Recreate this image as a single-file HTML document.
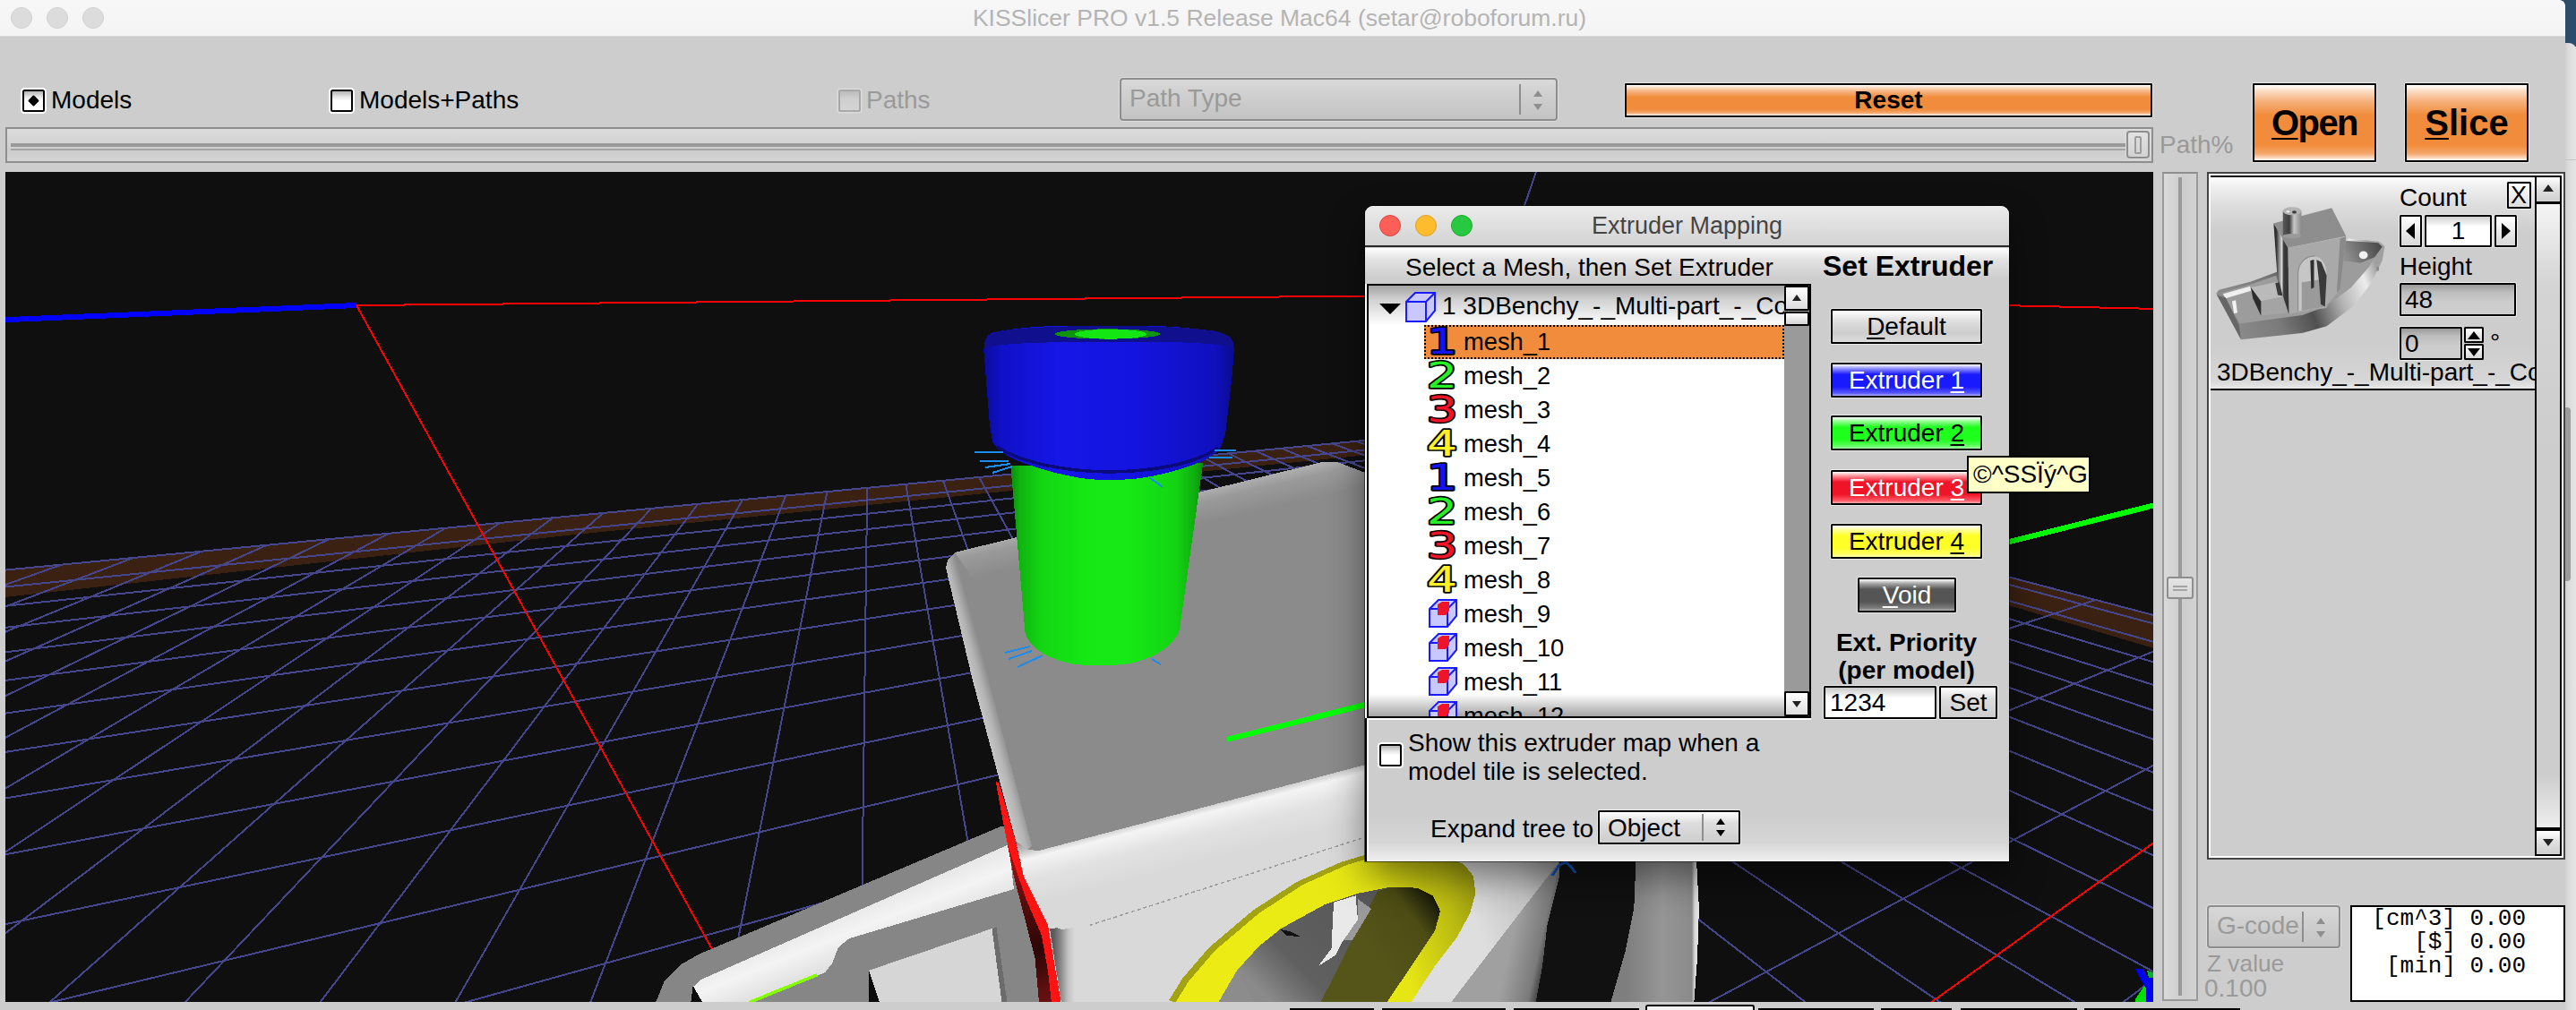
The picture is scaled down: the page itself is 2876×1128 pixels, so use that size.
<!DOCTYPE html>
<html lang="en">
<head>
<meta charset="utf-8">
<title>KISSlicer PRO v1.5 Release Mac64</title>
<style>
*{box-sizing:border-box;margin:0;padding:0}
html,body{width:2876px;height:1128px;overflow:hidden;background:#cdcdcd}
body{position:relative;font-family:"Liberation Sans",sans-serif;font-size:28px;color:#000;line-height:1}
.a{position:absolute}
.t{position:absolute;white-space:nowrap;line-height:30px;height:30px}
.g{color:#9a9a9a}
.b{font-weight:bold}
u{text-decoration-thickness:2px;text-underline-offset:3px}
#titlebar{left:0;top:0;width:2864px;height:41px;background:linear-gradient(#f7f7f7,#f4f4f4);border-bottom:1px solid #d6d6d6}
.tl{position:absolute;width:24px;height:24px;border-radius:50%;background:#dcdcdc;border:1px solid #d0d0d0;top:8px}
#wtitle{left:0;width:2857px;top:5px;text-align:center;color:#b4b4b4;font-size:26.5px}
.cb{position:absolute;width:25px;height:25px;background:linear-gradient(#b4b4b4,#e8e8e8 30%,#fff 50%);border:2px solid #000;border-radius:2.5px;box-shadow:0 0 0 2px #fff}
.cbd{border-color:#a8a8a8;background:linear-gradient(#bcbcbc,#cfcfcf 40%,#d4d4d4);box-shadow:0 0 0 1.5px #dcdcdc}
.btn{position:absolute;border:2px solid #000;border-radius:1px;text-align:center;box-shadow:0 0 0 1px rgba(255,255,255,.55)}
.or{background:linear-gradient(#fff 0%,#fbdcc4 8%,#f6b07a 22%,#f08c3c 40%,#f08c3c 80%,#f4a76c 91%,#fbd9bf 97%,#fff 100%)}
.dd{position:absolute;border:2px solid #8e8e8e;border-radius:4px;background:linear-gradient(#d8d8d8,#cbcbcb 60%,#c4c4c4);box-shadow:0 0 0 1px #dedede}
#vp{left:6px;top:192px;width:2398px;height:927px;background:#0f0f0f;overflow:hidden}
</style>
</head>
<body>
<!-- title bar -->
<div class="a" id="titlebar"></div>
<div class="tl" style="left:12px"></div><div class="tl" style="left:52px"></div><div class="tl" style="left:92px"></div>
<div class="t" id="wtitle">KISSlicer PRO v1.5 Release Mac64 (setar@roboforum.ru)</div>

<!-- toolbar row -->
<div class="cb" style="left:25px;top:100px"></div>
<div class="a" style="left:33px;top:108px;width:9px;height:9px;background:#000;transform:rotate(45deg);border-radius:1px"></div>
<div class="t" style="left:57px;top:97px">Models</div>
<div class="cb" style="left:369px;top:100px"></div>
<div class="t" style="left:401px;top:97px">Models+Paths</div>
<div class="cb cbd" style="left:936px;top:100px"></div>
<div class="t g" style="left:967px;top:97px">Paths</div>
<div class="dd" style="left:1250px;top:87px;width:489px;height:48px"></div>
<div class="t g" style="left:1261px;top:95px">Path Type</div>
<div class="a" style="left:1696px;top:94px;width:2px;height:34px;background:#8e8e8e"></div>
<div class="btn or b" style="left:1814px;top:93px;width:589px;height:38px;line-height:34px">Reset</div>
<div class="btn or b" style="left:2515px;top:93px;width:138px;height:88px;font-size:40px;line-height:84px;letter-spacing:-1.6px"><u>O</u>pen</div>
<div class="btn or b" style="left:2685px;top:93px;width:138px;height:88px;font-size:40px;line-height:84px"><u>S</u>lice</div>

<!-- path slider -->
<div class="a" style="left:6px;top:142px;width:2398px;height:40px;border:2px solid #8e8e8e;background:linear-gradient(#dcdcdc,#cdcdcd 70%,#d4d4d4)"></div>
<div class="a" style="left:12px;top:160px;width:2386px;height:4px;background:#999"></div>
<div class="a" style="left:12px;top:166px;width:2386px;height:2px;background:#a4a4a4"></div>
<div class="t g" style="left:2411px;top:147px">Path%</div>

<!-- viewport -->
<div class="a" id="vp">
<!--SCENE-START--><svg class="a" style="left:0;top:0" width="2398" height="927" viewBox="6 192 2398 927" shape-rendering="crispEdges">
<polygon points="0.0,637.2 1626.5,482.1 1626.5,498.1 1523.0,508.5 640.0,597.2 0.0,667.5" fill="#3b2111"/>
<polygon points="1626.5,482.1 2244.0,644.8 2410.0,688.5 2410.0,725.5 2244.0,676.5 1626.5,498.1" fill="#3b2111"/>
<path d="M1527.6 2903.6L3028.3 851.4M47.4 2902.8L2798.4 790.8M-1432.8 2902.0L2614.7 742.4M-2913.0 2901.2L2464.6 702.9M-4393.3 2900.3L2339.6 670.0M-5873.5 2899.5L2233.9 642.1M-7007.4 2815.6L2143.4 618.3M-4065.2 1891.4L2065.0 597.6M-2708.4 1465.3L1996.4 579.6M-1927.4 1220.0L1935.9 563.6M-1419.9 1060.6L1882.1 549.5M-1063.7 948.7L1834.0 536.8M-799.8 865.8L1790.8 525.4M-596.5 801.9L1751.7 515.1M-435.1 751.2L1716.1 505.7M-303.8 710.0L1683.6 497.2M-195.0 675.8L1653.9 489.4M-103.2 647.0L1626.5 482.1M-6306.4 2899.3L69.0 630.6M-5823.4 2899.6L148.9 623.0M-5340.4 2899.8L225.2 615.7M-4857.5 2900.1L297.9 608.8M-4374.5 2900.4L367.4 602.1M-3891.5 2900.6L433.9 595.8M-3408.6 2900.9L497.6 589.7M-2925.6 2901.2L558.6 583.9M-2442.6 2901.4L617.1 578.3M-1959.7 2901.7L673.3 573.0M-1476.7 2902.0L727.3 567.8M-993.7 2902.2L779.2 562.9M-510.8 2902.5L829.1 558.1M-27.8 2902.7L877.2 553.6M455.2 2903.0L923.5 549.1M938.1 2903.3L968.2 544.9M1421.1 2903.5L1011.3 540.8M1904.1 2903.8L1052.9 536.8M2387.0 2904.1L1093.1 533.0M2870.0 2904.3L1132.0 529.3M3353.0 2904.6L1169.6 525.7M3835.9 2904.9L1206.0 522.2M4318.9 2905.1L1241.2 518.9M4801.9 2905.4L1275.3 515.6M5284.8 2905.7L1308.4 512.5M5767.8 2905.9L1340.5 509.4M6250.7 2906.2L1371.6 506.4M6733.7 2906.5L1401.8 503.6M7216.7 2906.7L1431.1 500.8M7699.6 2907.0L1459.6 498.1M8182.6 2907.3L1487.2 495.4M8665.6 2907.5L1514.1 492.9M9148.5 2907.8L1540.3 490.4M9631.5 2908.0L1565.8 487.9M10114.5 2908.3L1590.6 485.6M10597.4 2908.6L1614.7 483.3M10838.9 2908.7L1626.5 482.1" stroke="#46468c" stroke-width="2" fill="none"/>
<path d="M398 341L1700 329L2410 345M398 341L795 1060M2404 941.5L2156 1119.5" stroke="#f00" stroke-width="2" fill="none"/>
<path d="M1668 329L1715.6 190" stroke="#46468c" stroke-width="2" fill="none"/>
<path d="M0 357.4L398 341" stroke="#00f" stroke-width="6" fill="none"/>
<defs>
<linearGradient id="gBlue" x1="0" x2="1" y1="0" y2="0"><stop offset="0" stop-color="#0c0c9a"/><stop offset=".07" stop-color="#1010c8"/><stop offset=".3" stop-color="#1616e6"/><stop offset=".6" stop-color="#1414e0"/><stop offset=".92" stop-color="#1010c0"/><stop offset="1" stop-color="#0b0b90"/></linearGradient>
<linearGradient id="gGreen" x1="0" x2="1" y1="0" y2="0"><stop offset="0" stop-color="#0b8c0b"/><stop offset=".05" stop-color="#10b410"/><stop offset=".16" stop-color="#13d613"/><stop offset=".4" stop-color="#15e815"/><stop offset=".6" stop-color="#16ea16"/><stop offset=".86" stop-color="#13d413"/><stop offset=".96" stop-color="#0fac0f"/><stop offset="1" stop-color="#0b8c0b"/></linearGradient>
<linearGradient id="gRoofTop" gradientUnits="userSpaceOnUse" x1="1290" y1="562" x2="1298" y2="596"><stop offset="0" stop-color="#acacac"/><stop offset=".3" stop-color="#9a9a9a"/><stop offset="1" stop-color="#8b8b8b"/></linearGradient>
<linearGradient id="gRoofLeft" gradientUnits="userSpaceOnUse" x1="1094" y1="790" x2="1112" y2="785"><stop offset="0" stop-color="#c4c4c4"/><stop offset=".45" stop-color="#b4b4b4"/><stop offset="1" stop-color="#8b8b8b"/></linearGradient>
<linearGradient id="gLip" gradientUnits="userSpaceOnUse" x1="1330" y1="890" x2="1348" y2="960"><stop offset="0" stop-color="#8c8c8c"/><stop offset=".12" stop-color="#b4b4b4"/><stop offset=".3" stop-color="#f4f4f4"/><stop offset=".6" stop-color="#e2e2e2"/><stop offset="1" stop-color="#d9d9d9"/></linearGradient>
<linearGradient id="gCorner" gradientUnits="userSpaceOnUse" x1="1176" y1="0" x2="1200" y2="0"><stop offset="0" stop-color="#5a5a5a"/><stop offset=".35" stop-color="#8a8a8a"/><stop offset=".7" stop-color="#c4c4c4"/><stop offset="1" stop-color="#d9d9d9"/></linearGradient>
<linearGradient id="gRed" gradientUnits="userSpaceOnUse" x1="1130" y1="950" x2="1165" y2="1110"><stop offset="0" stop-color="#b01010"/><stop offset=".35" stop-color="#5a0c0c"/><stop offset=".7" stop-color="#2c0606"/><stop offset="1" stop-color="#641010"/></linearGradient>
<linearGradient id="gYel" gradientUnits="userSpaceOnUse" x1="1380" y1="1040" x2="1650" y2="960"><stop offset="0" stop-color="#ecec14"/><stop offset=".6" stop-color="#e6e614"/><stop offset=".85" stop-color="#b8b812"/><stop offset="1" stop-color="#8e8e10"/></linearGradient>
<linearGradient id="gOlive" gradientUnits="userSpaceOnUse" x1="1530" y1="1060" x2="1608" y2="1000"><stop offset="0" stop-color="#55551a"/><stop offset=".6" stop-color="#4c4c14"/><stop offset="1" stop-color="#0c0c08"/></linearGradient>
<linearGradient id="gHole" gradientUnits="userSpaceOnUse" x1="1400" y1="1100" x2="1500" y2="1000"><stop offset="0" stop-color="#8a8a8a"/><stop offset=".35" stop-color="#606060"/><stop offset="1" stop-color="#585858"/></linearGradient>
<linearGradient id="gSideA" gradientUnits="userSpaceOnUse" x1="1640" y1="1010" x2="1740" y2="975"><stop offset="0" stop-color="#dedede"/><stop offset=".6" stop-color="#c4c4c4"/><stop offset="1" stop-color="#9a9a9a"/></linearGradient>
<linearGradient id="gSideB" gradientUnits="userSpaceOnUse" x1="1690" y1="1040" x2="1735" y2="1050"><stop offset="0" stop-color="#a0a0a0"/><stop offset=".7" stop-color="#7a7a7a"/><stop offset="1" stop-color="#2a2a2a"/></linearGradient>
<linearGradient id="gSideC" gradientUnits="userSpaceOnUse" x1="1815" y1="0" x2="1897" y2="0"><stop offset="0" stop-color="#7e7e7e"/><stop offset=".5" stop-color="#969696"/><stop offset=".9" stop-color="#8a8a8a"/><stop offset=".94" stop-color="#d8d8d8"/><stop offset="1" stop-color="#e8e8e8"/></linearGradient>
<linearGradient id="gBeam" gradientUnits="userSpaceOnUse" x1="880" y1="1040" x2="900" y2="1090"><stop offset="0" stop-color="#e6e6e6"/><stop offset=".5" stop-color="#f4f4f4"/><stop offset="1" stop-color="#e2e2e2"/></linearGradient>
</defs>
<polygon points="731.9,1120.0 741.7,1096.0 761.4,1076.4 781.0,1065.4 1117.4,923.0 1124.0,924.0 1200.0,1120.0" fill="#868686"/>
<polygon points="773.7,1102.2 783.5,1093.6 1126.0,943.3 1132.0,993.0 948.0,1048.2 936.0,1058.0 929.0,1076.0 921.0,1086.2 837.5,1120.0 771.2,1120.0" fill="url(#gBeam)"/>
<polygon points="771.2,1120.0 773.7,1101.0 784.7,1120.0" fill="#0c0c0c"/>
<path d="M836.3 1119.6L912.4 1088.7" stroke="#86ff00" stroke-width="3.5"/>
<polygon points="970.0,1083.8 1107.5,1037.1 1118.6,1120.0 982.3,1120.0" fill="#d6d6d6"/>
<polygon points="970.0,1083.8 982.3,1120.0 970.0,1120.0" fill="#0c0c0c"/>
<polygon points="1107.5,1037.1 1112.5,1036.0 1124.6,1120.0 1118.6,1120.0" fill="#6c6c6c"/>
<polygon points="1168.0,1030.0 1216.0,1033.0 1524.0,935.0 1540.0,930.0 1540.0,1120.0 1184.0,1120.0" fill="#d9d9d9"/>
<polygon points="1172.0,1037.0 1208.0,1034.0 1208.0,1120.0 1185.0,1120.0" fill="url(#gCorner)"/>
<polygon points="1111.8,873.0 1119.0,913.0 1131.9,978.7 1155.5,1069.8 1160.0,1120.0 1184.7,1120.0 1170.0,1033.3 1142.8,978.7 1133.7,938.6 1115.5,875.0" fill="#ff1414"/>
<polygon points="1124.0,940.0 1131.0,962.0 1146.0,1005.0 1163.0,1045.0 1170.0,1085.0 1174.0,1120.0 1160.0,1120.0 1155.5,1069.8 1131.9,978.7" fill="url(#gRed)"/>
<polygon points="1134.0,939.0 1147.0,949.0 1160.0,950.0 1540.0,850.0 1540.0,930.0 1216.5,1033.4 1186.0,1038.0 1170.0,1033.0 1143.0,979.0" fill="url(#gLip)"/>
<path d="M1216.5 1033.4L1523.4 935.2" stroke="#9c9c9c" stroke-width="1.5" stroke-dasharray="4 3" fill="none"/>
<polygon points="1056.0,634.0 1058.0,626.0 1066.0,617.0 1474.0,516.5 1493.0,516.0 1540.0,534.0 1540.0,850.0 1160.0,950.0 1147.0,949.0 1134.0,939.0 1086.0,760.0" fill="#8b8b8b"/>
<polygon points="1066.0,617.0 1474.0,516.5 1493.0,516.0 1540.0,534.0 1540.0,540.0 1082.0,648.0" fill="url(#gRoofTop)"/>
<polygon points="1056.0,634.0 1058.0,626.0 1066.0,617.0 1082.0,640.0 1104.0,760.0 1152.0,945.0 1147.0,949.0 1134.0,939.0 1086.0,760.0" fill="url(#gRoofLeft)"/>
<path d="M1370 826L2410 563" stroke="#00ff00" stroke-width="6" fill="none"/>
<polygon points="1540.0,940.0 1742.0,940.0 1742.0,964.0 1619.6,1120.0 1540.0,1120.0" fill="url(#gSideA)"/>
<polygon points="1741.0,962.0 1745.0,962.0 1741.5,977.2 1727.5,1033.0 1722.0,1079.6 1714.5,1120.0 1619.6,1120.0" fill="url(#gSideB)"/>
<polygon points="1741.0,962.0 1826.4,962.0 1824.3,1014.5 1815.0,1061.0 1798.2,1120.0 1714.5,1120.0 1722.0,1079.6 1727.5,1033.0 1741.5,977.2" fill="#111"/>
<polygon points="1826.4,962.0 1894.1,962.0 1896.9,1014.5 1895.0,1070.3 1891.3,1120.0 1798.2,1120.0 1815.0,1061.0 1824.3,1014.5" fill="url(#gSideC)"/>
<polygon points="1305.2,1117.0 1320.0,1093.0 1349.4,1058.7 1398.5,1017.0 1447.6,985.0 1496.7,963.0 1521.3,955.6 1553.0,950.0 1560.0,953.0 1528.3,958.6 1503.7,966.0 1454.6,988.0 1405.5,1020.0 1356.4,1061.7 1327.0,1096.0 1312.2,1120.0" fill="#a2a212"/>
<polygon points="1312.2,1120.0 1327.0,1096.0 1356.4,1061.7 1405.5,1020.0 1454.6,988.0 1503.7,966.0 1528.3,958.6 1560.0,953.0 1600.0,953.0 1633.8,964.7 1644.9,978.2 1647.3,997.8 1641.2,1020.0 1626.5,1047.0 1601.9,1078.9 1575.0,1120.0" fill="url(#gYel)"/>
<polygon points="1360.0,1120.0 1381.0,1083.8 1405.5,1056.8 1430.0,1037.1 1479.2,1010.1 1516.0,997.8 1552.8,990.5 1582.3,991.7 1599.5,1000.3 1608.0,1017.5 1602.0,1039.6 1577.4,1076.4 1548.0,1120.0" fill="url(#gHole)"/>
<polygon points="1538.0,995.4 1552.8,990.5 1582.3,991.7 1599.5,1000.3 1608.0,1017.5 1602.0,1039.6 1577.4,1076.4 1548.0,1120.0 1474.2,1120.0 1516.0,1037.1" fill="url(#gOlive)"/>
<polygon points="1360.0,1120.0 1381.0,1083.8 1400.6,1120.0" fill="#8c8c8c"/>
<polygon points="1489.0,1007.7 1513.5,1000.3 1516.0,1027.3 1498.8,1051.9 1491.4,1066.6 1471.8,1078.9 1486.5,1059.2" fill="#e9e9e9"/>
<polygon points="1516.0,1004.0 1531.0,1015.0 1510.0,1050.0 1500.0,1050.0 1516.0,1027.0" fill="#9a9a9a"/>
<polygon points="1429.0,1038.0 1440.0,1040.0 1452.0,1046.0 1436.0,1045.0" fill="#111"/>
<path d="M1733 978L1741 966L1748 963L1754 968L1759 975" stroke="#0a50b4" stroke-width="3" fill="none"/>
<path d="M1128.3 520L1144.5 706C1147 722 1170 737 1200 742Q1232 745 1262 741C1290 735 1312 720 1317 703L1343.2 517Z" fill="url(#gGreen)"/>
<path d="M1177.7 364C1160 364.3 1125 367 1107 371.8C1100 375 1098.5 382 1098.3 391.6L1100.8 422.8L1105 474.8L1108.1 493.5C1110 499 1120 506.5 1128.9 511.2C1140 517 1180 531 1215.2 535.1Q1239 537 1263 535.1C1290 533 1325 523 1344.1 514.3C1352 510 1361 504 1362.8 499.7L1368 485.2L1375.3 422.8L1377.8 391.6C1378 383 1376 376 1358.6 370.8C1340 367 1310 364.3 1288 364Z" fill="url(#gBlue)"/>
<path d="M1113 499C1140 517 1190 526.5 1237.7 527C1285 526.5 1332 519 1360 500" stroke="#0a0a78" stroke-width="3.5" fill="none"/>
<path d="M1099 388C1100 374 1108 371 1125 368.5C1160 364.5 1200 364 1238 364C1280 364 1320 365 1352 369C1370 372 1377 376 1377.5 388C1350 381.5 1290 381.5 1238 382C1180 382 1130 382 1099 388Z" fill="#10108e"/>
<ellipse cx="1236.5" cy="373" rx="58.6" ry="5.6" fill="#109410"/>
<ellipse cx="1240" cy="373.2" rx="40" ry="5.4" fill="#14e614"/>
<path d="M1088 505H1120M1094 515H1126M1100 522L1128 518M1108 528L1130 521M1356 503H1380M1350 511H1376M1283 533L1298 544M1122 729L1150 722M1126 736L1152 727M1136 745L1164 732M1286 736L1296 742" stroke="#1a8cf0" stroke-width="2" fill="none"/>
<polygon points="2384,1082 2393,1082 2398,1092 2404,1092 2404,1120 2396,1120 2395,1102 2390,1094" fill="#0000f0"/>
<polygon points="2384,1120 2384,1116 2394,1101 2396,1104 2396,1120" fill="#00e000"/>
<polygon points="2397,1084 2404,1086 2404,1092 2399,1092" fill="#00b030"/>
</svg><!--SCENE-END-->
</div>

<!-- dropdown arrows (Path Type) -->
<svg class="a" style="left:1709px;top:100px" width="16" height="24" viewBox="0 0 16 24"><path d="M8 1 L13 8 H3 Z M8 23 L13 16 H3 Z" fill="#8e8e8e"/></svg>
<!-- path slider thumb -->
<div class="a" style="left:2374px;top:146px;width:26px;height:31px;border:2px solid #8e8e8e;border-radius:4px;background:linear-gradient(#e2e2e2,#d2d2d2);box-shadow:0 0 0 1px #e0e0e0"></div>
<div class="a" style="left:2383px;top:152px;width:8px;height:20px;border:2px solid #9c9c9c;border-radius:2px"></div>

<!-- vertical Z slider -->
<div class="a" style="left:2414px;top:192px;width:40px;height:926px;border:2px solid #9a9a9a;border-top-color:#8e8e8e;background:linear-gradient(90deg,#dadada,#cdcdcd 60%,#d2d2d2)"></div>
<div class="a" style="left:2432px;top:198px;width:4px;height:914px;background:#999"></div>
<div class="a" style="left:2419px;top:644px;width:30px;height:25px;border:2px solid #8e8e8e;border-radius:3px;background:linear-gradient(#e4e4e4,#d6d6d6)"></div>
<div class="a" style="left:2426px;top:654px;width:16px;height:2px;background:#a4a4a4"></div>
<div class="a" style="left:2426px;top:658px;width:16px;height:2px;background:#a4a4a4"></div>

<!-- model list box -->
<div class="a" style="left:2464px;top:192px;width:400px;height:768px;border:2px solid #444;background:#cdcdcd;box-shadow:inset 0 0 0 2px #fff"></div>
<!-- model tile -->
<div class="a" style="left:2468px;top:196px;width:363px;height:240px;background:linear-gradient(#fff 0,#f0f0f0 4%,#dcdcdc 14%,#cdcdcd 26%,#cdcdcd 80%,#d6d6d6 96%,#e8e8e8 100%);border-top:2px solid #000;border-bottom:2px solid #000"></div>
<div class="t" style="left:2679px;top:206px">Count</div>
<div class="a" style="left:2799px;top:203px;width:27px;height:30px;border:2px solid #000;border-radius:1.5px;background:linear-gradient(#fff,#ddd);box-shadow:0 0 0 1px #eee"></div>
<div class="t" style="left:2803px;top:203px;font-size:27px">X</div>
<div class="a" style="left:2679px;top:240px;width:25px;height:36px;border:2px solid #000;border-radius:1.5px;background:linear-gradient(#fff,#d8d8d8);box-shadow:0 0 0 1px #eee"></div>
<svg class="a" style="left:2684px;top:248px" width="14" height="20"><path d="M12 1 V19 L2 10 Z" fill="#000"/></svg>
<div class="a" style="left:2707px;top:240px;width:75px;height:36px;border:2px solid #000;border-radius:1.5px;background:linear-gradient(#d0d0d0,#fff 35%);box-shadow:0 0 0 1px #eee"></div>
<div class="t" style="left:2707px;top:243px;width:75px;text-align:center">1</div>
<div class="a" style="left:2785px;top:240px;width:25px;height:36px;border:2px solid #000;border-radius:1.5px;background:linear-gradient(#fff,#d8d8d8);box-shadow:0 0 0 1px #eee"></div>
<svg class="a" style="left:2791px;top:248px" width="14" height="20"><path d="M2 1 V19 L12 10 Z" fill="#000"/></svg>
<div class="t" style="left:2679px;top:283px">Height</div>
<div class="a" style="left:2679px;top:316px;width:130px;height:37px;border:2px solid #000;border-radius:1.5px;background:linear-gradient(#999 0,#bdbdbd 25%,#cdcdcd 60%);box-shadow:0 0 0 1px #eee"></div>
<div class="t" style="left:2685px;top:320px">48</div>
<div class="a" style="left:2679px;top:365px;width:70px;height:37px;border:2px solid #000;border-radius:1.5px;background:linear-gradient(#999 0,#bdbdbd 25%,#cdcdcd 60%);box-shadow:0 0 0 1px #eee"></div>
<div class="t" style="left:2685px;top:369px">0</div>
<div class="a" style="left:2751px;top:365px;width:22px;height:18px;border:2px solid #000;border-radius:1.5px;background:linear-gradient(#fff,#d8d8d8)"></div>
<div class="a" style="left:2751px;top:384px;width:22px;height:18px;border:2px solid #000;border-radius:1.5px;background:linear-gradient(#fff,#d8d8d8)"></div>
<svg class="a" style="left:2754px;top:368px" width="16" height="32"><path d="M8 2 L15 11 H1 Z M8 30 L15 21 H1 Z" fill="#000"/></svg>
<div class="t" style="left:2780px;top:368px">°</div>
<div class="t" style="left:2475px;top:401px;width:356px;overflow:hidden">3DBenchy_-_Multi-part_-_Color</div>
<!--BENCHY-START--><svg class="a" style="left:2466px;top:210px" width="214" height="190" viewBox="0 0 1138 1010">
<defs>
<linearGradient id="bHull" gradientUnits="userSpaceOnUse" x1="120" y1="800" x2="1000" y2="480"><stop offset="0" stop-color="#8c8c8c"/><stop offset=".3" stop-color="#7a7a7a"/><stop offset=".52" stop-color="#505050"/><stop offset=".72" stop-color="#b4b4b4"/><stop offset=".9" stop-color="#ececec"/><stop offset="1" stop-color="#a0a0a0"/></linearGradient>
<linearGradient id="bBow" gradientUnits="userSpaceOnUse" x1="1010" y1="330" x2="820" y2="420"><stop offset="0" stop-color="#4a4a4a"/><stop offset=".5" stop-color="#6c6c6c"/><stop offset="1" stop-color="#8e8e8e"/></linearGradient>
<linearGradient id="bChim" x1="0" x2="1" y1="0" y2="0"><stop offset="0" stop-color="#5a5a5a"/><stop offset=".35" stop-color="#3e3e3e"/><stop offset=".6" stop-color="#c8c8c8"/><stop offset="1" stop-color="#8a8a8a"/></linearGradient>
<linearGradient id="bLeft" gradientUnits="userSpaceOnUse" x1="400" y1="0" x2="475" y2="0"><stop offset="0" stop-color="#2e2e2e"/><stop offset=".45" stop-color="#d8d8d8"/><stop offset=".6" stop-color="#3a3a3a"/><stop offset="1" stop-color="#333"/></linearGradient>
</defs>
<polygon points="45,625 60,605 250,555 400,500 800,330 830,300 1010,318 1045,345 1030,430 960,570 860,700 700,820 560,860 190,900" fill="url(#bHull)"/>
<polygon points="75,622 250,572 400,520 470,740 700,712 780,590 800,335 1005,330 1025,350 950,470 845,590 695,705 555,755 185,805" fill="#9c9c9c"/>
<polygon points="805,312 1005,325 1030,348 985,410 900,445 800,432" fill="url(#bBow)"/>
<polygon points="85,628 245,583 252,610 100,655" fill="#efefef"/>
<polygon points="138,672 160,666 170,740 150,745" fill="#f2f2f2"/>
<polygon points="60,640 100,650 180,815 190,895 45,630" fill="#666"/>
<!-- stern box -->
<polygon points="250,590 400,558 465,640 310,672" fill="#bababa"/>
<polygon points="310,672 465,640 470,742 310,757" fill="#a4a4a4"/>
<polygon points="250,590 310,672 310,757 262,655" fill="#2c2c2c"/>
<polygon points="395,565 420,560 440,640 410,635" fill="#3a3a3a"/>
<!-- cabin -->
<polygon points="385,210 730,118 815,285 470,355" fill="#8e8e8e"/>
<polygon points="470,355 815,288 780,600 690,712 475,747" fill="#a9a9a9"/>
<polygon points="385,210 470,355 475,747 440,640 405,500" fill="url(#bLeft)"/>
<polygon points="780,300 815,288 780,600 760,620" fill="#8a8a8a"/>
<!-- door -->
<path d="M530 730V500C535 440 580 400 630 405C680 415 700 460 700 520L690 705Z" fill="#c6c6c6"/>
<polygon points="552,560 690,540 690,705 552,728" fill="#9a9a9a"/>
<polygon points="603,430 625,425 625,590 608,600" fill="#2e2e2e"/>
<polygon points="640,425 668,440 700,520 690,705 665,690 655,560" fill="#3a3a3a"/>
<path d="M530 730V500C535 440 580 400 630 405" fill="none" stroke="#8a8a8a" stroke-width="6"/>
<!-- chimney -->
<rect x="440" y="135" width="110" height="150" fill="url(#bChim)"/>
<ellipse cx="495" cy="285" rx="55" ry="14" fill="#9a9a9a"/>
<ellipse cx="495" cy="137" rx="55" ry="24" fill="#b4b4b4"/>
<ellipse cx="508" cy="143" rx="13" ry="9" fill="#3c3c3c"/>
<ellipse cx="470" cy="140" rx="10" ry="7" fill="#e8e8e8"/>
<!-- bow hole -->
<ellipse cx="918" cy="398" rx="26" ry="23" fill="#f0f0f0"/>
<ellipse cx="1003" cy="480" rx="8" ry="14" fill="#8a8a8a"/>
</svg>
<!--BENCHY-END-->
<!-- list scrollbar -->
<div class="a" style="left:2830px;top:196px;width:30px;height:760px;border-left:2px solid #000;border-right:2px solid #000;background:linear-gradient(#fff 0,#f0f0f0 6%,#d4d4d4 16%,#cdcdcd 40%,#cdcdcd 88%,#fff 100%)"></div>

<div class="a" style="left:2830px;top:196px;width:30px;height:31px;border:2px solid #000;background:linear-gradient(#fff,#e2e2e2 45%,#cfcfcf)"></div>
<div class="a" style="left:2830px;top:225px;width:30px;height:3px;background:#000"></div>
<svg class="a" style="left:2839px;top:206px" width="12" height="8"><path d="M6 0 L12 8 H0 Z" fill="#222"/></svg>
<div class="a" style="left:2830px;top:924px;width:30px;height:3px;background:#000"></div>
<div class="a" style="left:2830px;top:926px;width:30px;height:30px;border:2px solid #000;background:linear-gradient(#fff,#e2e2e2 45%,#cfcfcf)"></div>
<svg class="a" style="left:2839px;top:937px" width="12" height="8"><path d="M6 8 L12 0 H0 Z" fill="#222"/></svg>

<!-- G-code dropdown / Z value / info -->
<div class="dd" style="left:2464px;top:1011px;width:149px;height:48px"></div>
<div class="t g" style="left:2475px;top:1019px">G-code</div>
<div class="a" style="left:2570px;top:1018px;width:2px;height:34px;background:#8e8e8e"></div>
<svg class="a" style="left:2583px;top:1024px" width="16" height="24" viewBox="0 0 16 24"><path d="M8 1 L13 8 H3 Z M8 23 L13 16 H3 Z" fill="#8e8e8e"/></svg>
<div class="t g" style="left:2464px;top:1061px;font-size:26.3px">Z value</div>
<div class="t g" style="left:2461px;top:1089px">0.100</div>
<div class="a" style="left:2624px;top:1011px;width:240px;height:108px;border:2px solid #000;background:#fff"></div>
<pre class="a" style="left:2624px;top:1013px;width:196px;text-align:right;font-family:'Liberation Mono',monospace;font-size:26px;line-height:26.3px">[cm^3] 0.00
[$] 0.00
[min] 0.00</pre>

<!-- bottom tab tops -->
<div class="a" style="left:1440px;top:1126px;width:94px;height:2px;background:#000"></div>
<div class="a" style="left:1543px;top:1126px;width:138px;height:2px;background:#000"></div>
<div class="a" style="left:1690px;top:1126px;width:140px;height:2px;background:#000"></div>
<div class="a" style="left:1837px;top:1122px;width:122px;height:6px;background:#f4f4f4;border:2px solid #000;border-bottom:0;border-radius:3px 3px 0 0"></div>
<div class="a" style="left:1963px;top:1126px;width:129px;height:2px;background:#000"></div>
<div class="a" style="left:2100px;top:1126px;width:79px;height:2px;background:#000"></div>
<div class="a" style="left:2189px;top:1126px;width:130px;height:2px;background:#000"></div>
<div class="a" style="left:2327px;top:1126px;width:174px;height:2px;background:#000"></div>

<!-- right edge sliver: desktop + other window -->
<div class="a" style="left:2864px;top:0;width:12px;height:1128px;background:#d6d6d6"></div>
<div class="a" style="left:2864px;top:0;width:12px;height:52px;background:#2b4d6b"></div>
<div class="a" style="left:2864px;top:48px;width:12px;height:1080px;background:linear-gradient(90deg,#cfcfcf,#dadada 25%,#e6e6e6);border-radius:0 8px 0 0"></div>
<div class="a" style="left:2864px;top:178px;width:12px;height:1px;background:#c4c4c4"></div>
<div class="a" style="left:2864px;top:455px;width:6px;height:194px;background:#9c9c9c;border-radius:0 4px 4px 0"></div>
<div class="a" style="left:2858px;top:0;width:6px;height:6px;background:radial-gradient(circle at 0 100%,transparent 5.5px,#2b4d6b 6px)"></div>
<!--RIGHT-END-->
<!--DIALOG-START--><style>
#dlg{left:1524px;top:230px;width:719px;height:732px;border-radius:9px 9px 0 0;background:#cdcdcd;box-shadow:0 0 0 1px rgba(0,0,0,.55),0 18px 40px rgba(0,0,0,.45);overflow:hidden}
#dlg .t{font-size:26px}
#dtb{left:0;top:0;width:719px;height:46px;background:linear-gradient(#ebebeb,#d3d3d3);border-bottom:2px solid #2a2a2a}
.dl{position:absolute;top:10px;width:24px;height:24px;border-radius:50%}
.row{position:absolute;left:106px;font-size:27.3px;line-height:38px;height:38px;white-space:nowrap}
.nb{position:absolute;left:68px;font-weight:bold;font-size:41px;line-height:38px;height:38px;font-family:"DejaVu Sans","Liberation Sans",sans-serif;-webkit-text-stroke:1.6px #000;paint-order:stroke fill;transform:scaleX(1.08);transform-origin:left}
.eb{position:absolute;left:520px;width:169px;height:39px;border:2px solid #000;border-radius:1.5px;text-align:center;font-size:28px;line-height:35px;box-shadow:0 0 0 1px rgba(255,255,255,.6)}
</style>
<div class="a" id="dlg">
<div class="a" id="dtb"></div>
<div class="dl" style="left:16px;background:#fc5f57;border:1px solid #e0443e"></div>
<div class="dl" style="left:56px;background:#fdbc2e;border:1px solid #dea123"></div>
<div class="dl" style="left:96px;background:#28c840;border:1px solid #1aab29"></div>
<div class="t" style="left:0;width:719px;top:7px;text-align:center;color:#454545;font-size:27px">Extruder Mapping</div>
<div class="a" style="left:0;top:47px;width:719px;height:34px;background:linear-gradient(#fff,#e4e4e4 35%,#cdcdcd)"></div>
<div class="a" style="left:0;top:680px;width:719px;height:52px;background:linear-gradient(#cdcdcd,#d6d6d6 60%,#efefef)"></div>
<div class="t" style="left:45px;top:54px;font-size:28px!important">Select a Mesh, then Set Extruder</div>
<div class="t b" style="left:511px;top:52px;font-size:32px!important">Set Extruder</div>
<!-- tree -->
<div class="a" style="left:2px;top:87px;width:496px;height:485px;border:2px solid #000;background:#fff;overflow:hidden" id="tree">
 <div class="a" style="left:0;top:0;width:464px;height:44px;background:linear-gradient(#a4a4a4,#d0d0d0 35%,#fff)"></div>
 <div class="a" style="left:0;top:440px;width:464px;height:45px;background:linear-gradient(rgba(255,255,255,0),rgba(200,200,200,.0) 35%,rgba(125,125,125,.8))"></div>
 <div class="a" style="left:62px;top:44px;width:402px;height:38px;background:#f08c3c;border:2px dotted #000"></div>
 <svg class="a" style="left:12px;top:19px" width="24" height="14"><path d="M0 1 H24 L12 13 Z" fill="#000"/></svg>
 <svg class="a" style="left:40px;top:6px" width="36" height="36" viewBox="0 0 36 36"><path d="M2 12 L12 2 H34 V22 L24 34 H2 Z" fill="#c8c8ff" stroke="#1a1aff" stroke-width="2"/><path d="M2 12 H24 V34 M24 12 L34 2" fill="none" stroke="#1a1aff" stroke-width="2"/></svg>
 <div class="row" style="left:82px;top:4px;font-size:28px">1 3DBenchy_-_Multi-part_-_Color</div>
 <svg class="a" style="left:60px;top:44px" width="44" height="38" viewBox="0 0 44 38"><g font-family="DejaVu Sans,Liberation Sans,sans-serif" font-size="39.5" text-anchor="middle" transform="translate(22 31.5) scale(1.36 1)"><text stroke="#000" stroke-width="3.3" stroke-linejoin="round" fill="#000">1</text><text stroke="#1414f0" stroke-width="0.15" stroke-linejoin="round" fill="#1414f0">1</text></g></svg><div class="row" style="top:44px">mesh_1</div>
 <svg class="a" style="left:60px;top:82px" width="44" height="38" viewBox="0 0 44 38"><g font-family="DejaVu Sans,Liberation Sans,sans-serif" font-size="39.5" text-anchor="middle" transform="translate(22 31.5) scale(1.36 1)"><text stroke="#000" stroke-width="3.3" stroke-linejoin="round" fill="#000">2</text><text stroke="#28f028" stroke-width="0.15" stroke-linejoin="round" fill="#28f028">2</text></g></svg><div class="row" style="top:82px">mesh_2</div>
 <svg class="a" style="left:60px;top:120px" width="44" height="38" viewBox="0 0 44 38"><g font-family="DejaVu Sans,Liberation Sans,sans-serif" font-size="39.5" text-anchor="middle" transform="translate(22 31.5) scale(1.36 1)"><text stroke="#000" stroke-width="3.3" stroke-linejoin="round" fill="#000">3</text><text stroke="#f01428" stroke-width="0.15" stroke-linejoin="round" fill="#f01428">3</text></g></svg><div class="row" style="top:120px">mesh_3</div>
 <svg class="a" style="left:60px;top:158px" width="44" height="38" viewBox="0 0 44 38"><g font-family="DejaVu Sans,Liberation Sans,sans-serif" font-size="39.5" text-anchor="middle" transform="translate(22 31.5) scale(1.36 1)"><text stroke="#000" stroke-width="3.3" stroke-linejoin="round" fill="#000">4</text><text stroke="#f8f028" stroke-width="0.15" stroke-linejoin="round" fill="#f8f028">4</text></g></svg><div class="row" style="top:158px">mesh_4</div>
 <svg class="a" style="left:60px;top:196px" width="44" height="38" viewBox="0 0 44 38"><g font-family="DejaVu Sans,Liberation Sans,sans-serif" font-size="39.5" text-anchor="middle" transform="translate(22 31.5) scale(1.36 1)"><text stroke="#000" stroke-width="3.3" stroke-linejoin="round" fill="#000">1</text><text stroke="#1414f0" stroke-width="0.15" stroke-linejoin="round" fill="#1414f0">1</text></g></svg><div class="row" style="top:196px">mesh_5</div>
 <svg class="a" style="left:60px;top:234px" width="44" height="38" viewBox="0 0 44 38"><g font-family="DejaVu Sans,Liberation Sans,sans-serif" font-size="39.5" text-anchor="middle" transform="translate(22 31.5) scale(1.36 1)"><text stroke="#000" stroke-width="3.3" stroke-linejoin="round" fill="#000">2</text><text stroke="#28f028" stroke-width="0.15" stroke-linejoin="round" fill="#28f028">2</text></g></svg><div class="row" style="top:234px">mesh_6</div>
 <svg class="a" style="left:60px;top:272px" width="44" height="38" viewBox="0 0 44 38"><g font-family="DejaVu Sans,Liberation Sans,sans-serif" font-size="39.5" text-anchor="middle" transform="translate(22 31.5) scale(1.36 1)"><text stroke="#000" stroke-width="3.3" stroke-linejoin="round" fill="#000">3</text><text stroke="#f01428" stroke-width="0.15" stroke-linejoin="round" fill="#f01428">3</text></g></svg><div class="row" style="top:272px">mesh_7</div>
 <svg class="a" style="left:60px;top:310px" width="44" height="38" viewBox="0 0 44 38"><g font-family="DejaVu Sans,Liberation Sans,sans-serif" font-size="39.5" text-anchor="middle" transform="translate(22 31.5) scale(1.36 1)"><text stroke="#000" stroke-width="3.3" stroke-linejoin="round" fill="#000">4</text><text stroke="#f8f028" stroke-width="0.15" stroke-linejoin="round" fill="#f8f028">4</text></g></svg><div class="row" style="top:310px">mesh_8</div>
 <svg class="a" style="left:66px;top:349px" width="34" height="34" viewBox="0 0 34 34"><path d="M2 12 L12 2 H32 V20 L22 32 H2 Z" fill="#c8c8ff" stroke="#1a1aff" stroke-width="2"/><path d="M2 12 H22 V32 M22 12 L32 2" fill="none" stroke="#1a1aff" stroke-width="2"/><path d="M11 12 V7 L16 4 H24 V14 L20 19 H11 Z" fill="#f01428"/></svg><div class="row" style="top:348px">mesh_9</div>
 <svg class="a" style="left:66px;top:387px" width="34" height="34" viewBox="0 0 34 34"><path d="M2 12 L12 2 H32 V20 L22 32 H2 Z" fill="#c8c8ff" stroke="#1a1aff" stroke-width="2"/><path d="M2 12 H22 V32 M22 12 L32 2" fill="none" stroke="#1a1aff" stroke-width="2"/><path d="M11 12 V7 L16 4 H24 V14 L20 19 H11 Z" fill="#f01428"/></svg><div class="row" style="top:386px">mesh_10</div>
 <svg class="a" style="left:66px;top:425px" width="34" height="34" viewBox="0 0 34 34"><path d="M2 12 L12 2 H32 V20 L22 32 H2 Z" fill="#c8c8ff" stroke="#1a1aff" stroke-width="2"/><path d="M2 12 H22 V32 M22 12 L32 2" fill="none" stroke="#1a1aff" stroke-width="2"/><path d="M11 12 V7 L16 4 H24 V14 L20 19 H11 Z" fill="#f01428"/></svg><div class="row" style="top:424px">mesh_11</div>
 <svg class="a" style="left:66px;top:463px" width="34" height="34" viewBox="0 0 34 34"><path d="M2 12 L12 2 H32 V20 L22 32 H2 Z" fill="#c8c8ff" stroke="#1a1aff" stroke-width="2"/><path d="M2 12 H22 V32 M22 12 L32 2" fill="none" stroke="#1a1aff" stroke-width="2"/><path d="M11 12 V7 L16 4 H24 V14 L20 19 H11 Z" fill="#f01428"/></svg><div class="row" style="top:462px">mesh_12</div>
 <!-- scrollbar -->
 <div class="a" style="left:464px;top:0;width:28px;height:481px;background:#9a9a9a"></div>
 <div class="a" style="left:464px;top:0;width:28px;height:28px;border:2px solid #000;border-radius:1.5px;background:linear-gradient(#fff,#dcdcdc)"></div>
 <svg class="a" style="left:472px;top:9px" width="12" height="9"><path d="M6 1 L11 8 H1 Z" fill="#222"/></svg>
 <div class="a" style="left:464px;top:29px;width:28px;height:16px;border:2px solid #000;border-radius:1.5px;background:linear-gradient(#fff,#d4d4d4)"></div>
 <div class="a" style="left:464px;top:453px;width:28px;height:28px;border:2px solid #000;border-radius:1.5px;background:linear-gradient(#fff,#dcdcdc)"></div>
 <svg class="a" style="left:472px;top:463px" width="12" height="9"><path d="M6 8 L11 1 H1 Z" fill="#222"/></svg>
</div>
<div class="a" style="left:0;top:87px;width:2px;height:485px;background:#fff"></div>
<div class="a" style="left:0;top:572px;width:2px;height:160px;background:#000"></div>
<div class="a" style="left:2px;top:574px;width:2px;height:158px;background:#fff"></div>
<div class="a" style="left:2px;top:572px;width:496px;height:2px;background:#fff"></div>
<!-- buttons -->
<div class="eb" style="top:115px;background:linear-gradient(#fff,#e0e0e0 30%,#cdcdcd 70%,#dcdcdc)"><u>D</u>efault</div>
<div class="eb" style="top:175px;color:#fff;background:linear-gradient(#fff 0,#8a8aff 14%,#1a1aff 32%,#1a1aff 72%,#5a5aff 92%,#b0b0ff)">Extruder <u>1</u></div>
<div class="eb" style="top:234px;background:linear-gradient(#fff 0,#8aff8a 14%,#1eff1e 32%,#1eff1e 72%,#62ff62 92%,#b0ffb0)">Extruder <u>2</u></div>
<div class="eb" style="top:295px;color:#fff;background:linear-gradient(#fff 0,#ff8a92 14%,#f01428 32%,#f01428 72%,#ff5a66 92%,#ffb0b6)">Extruder <u>3</u></div>
<div class="eb" style="top:355px;background:linear-gradient(#fff 0,#ffff9a 14%,#ffff28 32%,#ffff28 72%,#ffff6a 92%,#ffffb8)">Extruder <u>4</u></div>
<div class="eb" style="top:415px;left:550px;width:110px;color:#fff;background:linear-gradient(#fff 0,#a2a2a2 14%,#555 32%,#555 72%,#7c7c7c 92%,#b4b4b4)"><u>V</u>oid</div>
<div class="t b" style="left:511px;width:187px;text-align:center;top:473px;font-size:28px!important">Ext. Priority</div>
<div class="t b" style="left:511px;width:187px;text-align:center;top:504px;font-size:28px!important">(per model)</div>
<div class="a" style="left:512px;top:536px;width:126px;height:37px;border:2px solid #000;border-radius:1.5px;background:linear-gradient(#c8c8c8,#fff 35%);box-shadow:0 0 0 1px #eee"></div>
<div class="t" style="left:519px;top:540px;font-size:28px!important">1234</div>
<div class="a" style="left:641px;top:536px;width:65px;height:37px;border:2px solid #000;border-radius:1.5px;background:linear-gradient(#fff,#dcdcdc 40%,#cdcdcd);box-shadow:0 0 0 1px #eee;text-align:center;font-size:28px;line-height:33px">Set</div>
<!-- bottom -->
<div class="cb" style="left:16px;top:601px"></div>
<div class="t" style="left:48px;top:585px;font-size:28px!important">Show this extruder map when a</div>
<div class="t" style="left:48px;top:617px;font-size:28px!important">model tile is selected.</div>
<div class="t" style="left:73px;top:681px;font-size:28px!important">Expand tree to</div>
<div class="a" style="left:260px;top:675px;width:159px;height:38px;border:2px solid #000;border-radius:1.5px;background:linear-gradient(#fff,#dedede 35%,#cdcdcd);box-shadow:0 0 0 1px #eee"></div>
<div class="t" style="left:271px;top:680px;font-size:28px!important">Object</div>
<div class="a" style="left:376px;top:679px;width:2px;height:30px;background:#8e8e8e"></div>
<svg class="a" style="left:389px;top:683px" width="16" height="22" viewBox="0 0 16 22"><path d="M8 1 L13 8 H3 Z M8 21 L13 14 H3 Z" fill="#000"/></svg>
</div>
<!-- tooltip -->
<div class="a" style="left:2196px;top:509px;width:138px;height:42px;background:#ffffc8;border:2px solid #000"></div>
<div class="t" style="left:2203px;top:515px;font-size:28px">©^SSÏý^G</div>

<!--DIALOG-END-->
</body>
</html>
